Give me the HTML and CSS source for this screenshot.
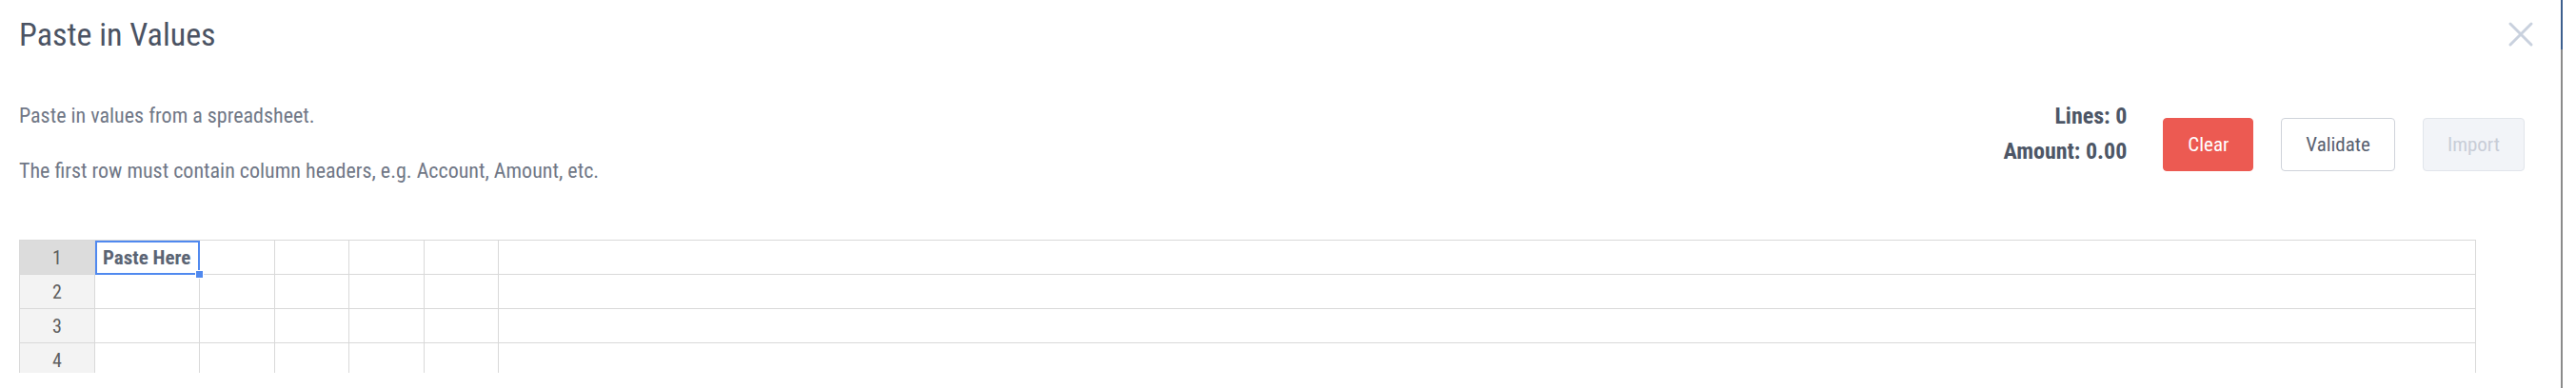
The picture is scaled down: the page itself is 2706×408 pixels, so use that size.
FILE: index.html
```html
<!DOCTYPE html>
<html lang="en">
<head>
    <meta charset="UTF-8">
    <meta name="viewport" content="width=device-width, initial-scale=1.0">
    <title>Paste in Values</title>
    <link rel="stylesheet" href="styles.css">
</head>
<body>

    <div class="screen">
        <div class="modal">
            <div class="modal-header">
                <h2 class="title">Paste in Values</h2>
                <button class="close-btn" aria-label="Close">
                    <svg width="28" height="28" viewBox="0 0 28 28">
                        <path d="M3 3 L25 25 M25 3 L3 25" stroke="#c9d1de" stroke-width="3" stroke-linecap="round" fill="none"/>
                    </svg>
                </button>
            </div>

            <div class="intro">
                <div class="intro-text">
                    <p>Paste in values from a spreadsheet.</p>
                    <p>The first row must contain column headers, e.g. Account, Amount, etc.</p>
                </div>
                <div class="actions">
                    <div class="totals">
                        <div>Lines: 0</div>
                        <div>Amount: 0.00</div>
                    </div>
                    <button class="btn btn-clear">Clear</button>
                    <button class="btn btn-validate">Validate</button>
                    <button class="btn btn-import" disabled>Import</button>
                </div>
            </div>

            <div class="sheet">
                <table class="grid">
                    <colgroup>
                        <col class="col-head">
                        <col class="col-a">
                        <col class="col-s">
                        <col class="col-s">
                        <col class="col-s">
                        <col class="col-s">
                        <col>
                    </colgroup>
                    <tbody>
                        <tr>
                            <th class="row-head current">1</th>
                            <td class="selected">Paste Here<span class="fill-handle"></span></td>
                            <td></td><td></td><td></td><td></td><td></td>
                        </tr>
                        <tr>
                            <th class="row-head">2</th>
                            <td></td><td></td><td></td><td></td><td></td><td></td>
                        </tr>
                        <tr>
                            <th class="row-head">3</th>
                            <td></td><td></td><td></td><td></td><td></td><td></td>
                        </tr>
                        <tr>
                            <th class="row-head">4</th>
                            <td></td><td></td><td></td><td></td><td></td><td></td>
                        </tr>
                    </tbody>
                </table>
            </div>
        </div>
        <div class="edge"></div>
    </div>

</body>
</html>
```

FILE: styles.css
```css
body {
    margin: 0;
    padding: 0;
    background-color: #ffffff;
    font-family: "Roboto Condensed", Roboto, sans-serif;
    font-stretch: condensed;
    color: #4d5565;
}
.screen {
    display: flex;
    height: 408px;
    overflow: hidden;
}
.modal {
    width: 2690px;
    flex: 0 0 2690px;
}
.edge {
    width: 2px;
    flex: 0 0 2px;
    background: linear-gradient(#3d5f8e 0 52px, #8b8b8b 52px);
}
.modal-header {
    display: flex;
    justify-content: space-between;
    align-items: center;
    padding: 16px 28px 0 20px;
}
.title {
    margin: 0;
    font-size: 34px;
    line-height: 40px;
    font-weight: 400;
    color: #4b5363;
}
.close-btn {
    width: 28px;
    height: 28px;
    padding: 0;
    border: none;
    background: none;
    cursor: pointer;
}
.close-btn svg {
    display: block;
}
.intro {
    display: flex;
    justify-content: space-between;
    align-items: flex-start;
    padding: 48px 38px 0 20px;
}
.intro-text p {
    margin: 30px 0 0;
    font-size: 22px;
    line-height: 28px;
    color: #707786;
}
.intro-text p:first-child {
    margin-top: 4px;
}
.actions {
    display: flex;
    align-items: flex-start;
}
.totals {
    margin-right: 38px;
    text-align: right;
    font-size: 24px;
    line-height: 37px;
    font-weight: 700;
    color: #4d5666;
}
.btn {
    height: 56px;
    margin-top: 20px;
    padding: 0 25px;
    border: 1px solid #cfd3da;
    border-radius: 4px;
    background-color: #ffffff;
    font-family: inherit;
    font-stretch: condensed;
    font-size: 21px;
    color: #596170;
    cursor: pointer;
}
.btn + .btn {
    margin-left: 29px;
}
.btn-clear {
    background-color: #ec5a52;
    border-color: #ec5a52;
    color: #ffffff;
}
.btn-import {
    background-color: #f2f4f8;
    border-color: #e1e5eb;
    color: #c8cdd7;
    cursor: default;
}
.sheet {
    margin: 58px 0 0 20px;
    width: 2581px;
    height: 140px;
    overflow: hidden;
}
.grid {
    width: 2581px;
    table-layout: fixed;
    border-collapse: collapse;
}
.col-head {
    width: 79px;
}
.col-a {
    width: 110px;
}
.col-s {
    width: 78.5px;
}
.grid th,
.grid td {
    height: 35px;
    padding: 0;
    border: 1px solid #d9d9d9;
}
.row-head {
    background-color: #f3f3f3;
    text-align: center;
    font-size: 20px;
    font-weight: 400;
    color: #5f5f5f;
}
.row-head.current {
    background-color: #dcdcdc;
}
.selected {
    position: relative;
    padding-left: 8px !important;
    outline: 2px solid #5089ef;
    outline-offset: -2px;
    font-size: 21px;
    font-weight: 700;
    color: #5b6474;
    white-space: nowrap;
}
.fill-handle {
    position: absolute;
    right: -5px;
    bottom: -5px;
    width: 7px;
    height: 7px;
    background-color: #5089ef;
    border: 1px solid #ffffff;
    z-index: 1;
}
```
